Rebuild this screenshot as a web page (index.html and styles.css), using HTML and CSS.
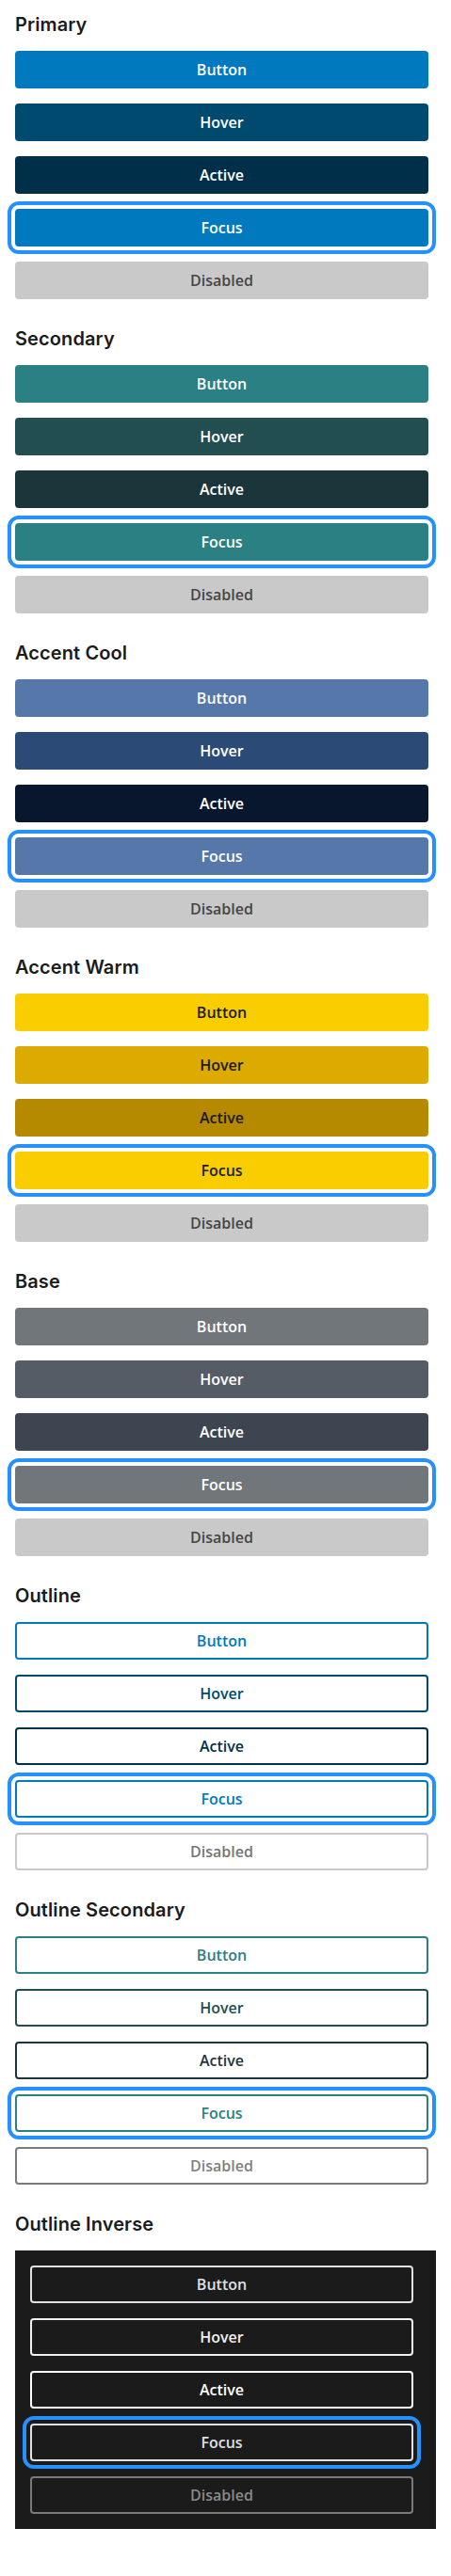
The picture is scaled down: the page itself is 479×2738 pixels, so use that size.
FILE: index.html
```html
<!DOCTYPE html>
<html lang="en">
<head>
<meta charset="utf-8">
<title>Buttons</title>
<link rel="stylesheet" href="styles.css">
</head>
<body>
<main class="page">
  <section class="group">
    <h3 class="group-title">Primary</h3>
    <div class="stack">
      <button class="btn primary">Button</button>
      <button class="btn primary hover">Hover</button>
      <button class="btn primary active">Active</button>
      <button class="btn primary focus">Focus</button>
      <button class="btn disabled">Disabled</button>
    </div>
  </section>
  <section class="group">
    <h3 class="group-title">Secondary</h3>
    <div class="stack">
      <button class="btn secondary">Button</button>
      <button class="btn secondary hover">Hover</button>
      <button class="btn secondary active">Active</button>
      <button class="btn secondary focus">Focus</button>
      <button class="btn disabled">Disabled</button>
    </div>
  </section>
  <section class="group">
    <h3 class="group-title">Accent Cool</h3>
    <div class="stack">
      <button class="btn cool">Button</button>
      <button class="btn cool hover">Hover</button>
      <button class="btn cool active">Active</button>
      <button class="btn cool focus">Focus</button>
      <button class="btn disabled">Disabled</button>
    </div>
  </section>
  <section class="group">
    <h3 class="group-title">Accent Warm</h3>
    <div class="stack">
      <button class="btn warm">Button</button>
      <button class="btn warm hover">Hover</button>
      <button class="btn warm active">Active</button>
      <button class="btn warm focus">Focus</button>
      <button class="btn disabled">Disabled</button>
    </div>
  </section>
  <section class="group">
    <h3 class="group-title">Base</h3>
    <div class="stack">
      <button class="btn base">Button</button>
      <button class="btn base hover">Hover</button>
      <button class="btn base active">Active</button>
      <button class="btn base focus">Focus</button>
      <button class="btn disabled">Disabled</button>
    </div>
  </section>
  <section class="group">
    <h3 class="group-title">Outline</h3>
    <div class="stack">
      <button class="btn outline">Button</button>
      <button class="btn outline hover">Hover</button>
      <button class="btn outline active">Active</button>
      <button class="btn outline focus">Focus</button>
      <button class="btn outline-disabled">Disabled</button>
    </div>
  </section>
  <section class="group">
    <h3 class="group-title">Outline Secondary</h3>
    <div class="stack">
      <button class="btn outline-sec">Button</button>
      <button class="btn outline-sec hover">Hover</button>
      <button class="btn outline-sec active">Active</button>
      <button class="btn outline-sec focus">Focus</button>
      <button class="btn outline-sec-disabled">Disabled</button>
    </div>
  </section>
  <section class="group">
    <h3 class="group-title">Outline Inverse</h3>
    <div class="stack dark">
      <button class="btn inverse">Button</button>
      <button class="btn inverse hover">Hover</button>
      <button class="btn inverse active">Active</button>
      <button class="btn inverse focus">Focus</button>
      <button class="btn inverse-disabled">Disabled</button>
    </div>
  </section>
</main>
</body>
</html>
```

FILE: styles.css
```css
* { box-sizing: border-box; }

html, body {
  margin: 0;
  padding: 0;
  background: #ffffff;
}

.page {
  padding: 12px 16px 48px;
  display: flex;
  flex-direction: column;
  gap: 28px;
}

.group-title {
  margin: 0 0 14px;
  font-family: Inter, "Noto Sans", sans-serif;
  font-weight: 600;
  font-size: 20px;
  line-height: 28px;
  color: #1b1b1b;
  letter-spacing: 0.1px;
}

.stack {
  display: flex;
  flex-direction: column;
  gap: 16px;
}

.stack.dark {
  background: #1b1b1b;
  padding: 16px;
}

.btn {
  width: calc(100% - 8px);
  height: 40px;
  margin: 0;
  padding: 0 16px;
  border: 0;
  border-radius: 4px;
  font-family: "Open Sans", "Noto Sans", sans-serif;
  font-weight: 600;
  font-size: 16px;
  line-height: 20px;
  color: #ffffff;
  text-align: center;
  cursor: pointer;
  -webkit-appearance: none;
  appearance: none;
}

.btn.focus {
  outline: 4px solid #2491ff;
  outline-offset: 4px;
}

/* Primary */
.primary { background: #0079bf; }
.primary.hover { background: #004a70; }
.primary.active { background: #003049; }

/* Secondary */
.secondary { background: #2a8082; }
.secondary.hover { background: #224e51; }
.secondary.active { background: #1b363a; }

/* Accent cool */
.cool { background: #5577aa; }
.cool.hover { background: #2b4a75; }
.cool.active { background: #08172e; }

/* Accent warm */
.warm { background: #facd00; color: #1b1b1b; }
.warm.hover { background: #dcaa00; }
.warm.active { background: #b58a00; }

/* Base */
.base { background: #71767a; }
.base.hover { background: #565c65; }
.base.active { background: #3d4551; }

/* Disabled solid */
.disabled {
  background: #c9c9c9;
  color: #454545;
}

/* Outline */
.outline {
  background: #ffffff;
  border: 2px solid #0079bf;
  color: #0079bf;
}
.outline.hover { border-color: #004a70; color: #004a70; }
.outline.active { border-color: #003049; color: #003049; }

.outline-disabled {
  background: #ffffff;
  border: 2px solid #c9c9c9;
  color: #757575;
}

/* Outline secondary */
.outline-sec {
  background: #ffffff;
  border: 2px solid #2a8082;
  color: #2a8082;
}
.outline-sec.hover { border-color: #224e51; color: #224e51; }
.outline-sec.active { border-color: #1b363a; color: #1b363a; }

.outline-sec-disabled {
  background: #ffffff;
  border: 2px solid #7a7a7a;
  color: #7f7f7f;
}

/* Outline inverse */
.inverse {
  background: #1b1b1b;
  border: 2px solid #dfe1e2;
  color: #dfe1e2;
}
.inverse.hover { border-color: #f0f0f0; color: #f0f0f0; }
.inverse.active { border-color: #ffffff; color: #ffffff; }

.inverse-disabled {
  background: #1b1b1b;
  border: 2px solid #7a7a7a;
  color: #8a8a8a;
}
```
